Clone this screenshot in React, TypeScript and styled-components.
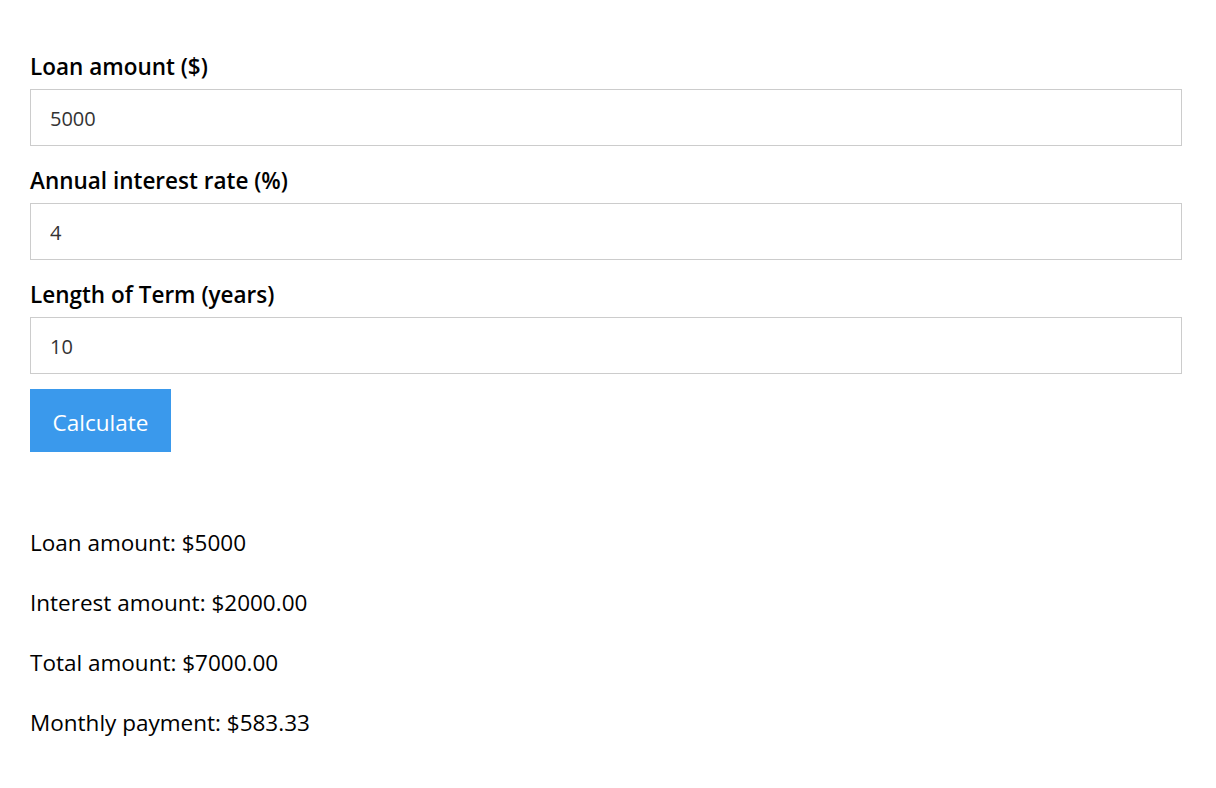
import React, { useState } from "react";
import styled, { createGlobalStyle } from "styled-components";

const GlobalStyle = createGlobalStyle`
  html, body {
    margin: 0;
    padding: 0;
    background: #ffffff;
  }
  body {
    font-family: "Open Sans", "Noto Sans", sans-serif;
    color: #000000;
  }
`;

const Page = styled.div`
  padding: 47px 34px 30px 30px;
`;

const Form = styled.form`
  display: flex;
  flex-direction: column;
  gap: 15px;
`;

const Field = styled.div`
  display: flex;
  flex-direction: column;
  padding-top: 5px;
  gap: 7px;
`;

const Label = styled.label`
  font-size: 22.5px;
  font-weight: 600;
  line-height: 30px;
`;

const Input = styled.input`
  box-sizing: border-box;
  width: 100%;
  height: 57px;
  padding: 2px 19px 0;
  border: 1px solid #cccccc;
  border-radius: 0;
  font-family: inherit;
  font-size: 20px;
  color: #333333;
  outline: none;
`;

const Button = styled.button`
  align-self: flex-start;
  width: 141px;
  height: 63px;
  padding: 3px 0 0;
  border: none;
  border-radius: 0;
  background: #3a99ec;
  color: #ffffff;
  font-family: inherit;
  font-size: 22.5px;
  cursor: pointer;
`;

const Results = styled.div`
  margin-top: 76px;
  display: flex;
  flex-direction: column;
  gap: 30px;
`;

const Line = styled.p`
  margin: 0;
  font-size: 22.5px;
  line-height: 30px;
`;

export default function App() {
  const [amount, setAmount] = useState("5000");
  const [rate, setRate] = useState("4");
  const [years, setYears] = useState("10");
  const [result, setResult] = useState({ amount: "5000", interest: 2000, total: 7000, monthly: 583.33 });

  const calculate = (e: React.FormEvent) => {
    e.preventDefault();
    const a = parseFloat(amount) || 0;
    const r = parseFloat(rate) || 0;
    const y = parseFloat(years) || 0;
    const interest = (a * r * y) / 100;
    const total = a + interest;
    setResult({ amount, interest, total, monthly: y ? total / (y * 12) : 0 });
  };

  return (
    <>
      <GlobalStyle />
      <Page>
        <Form onSubmit={calculate}>
          <Field>
            <Label htmlFor="amount">Loan amount ($)</Label>
            <Input id="amount" value={amount} onChange={(e) => setAmount(e.target.value)} />
          </Field>
          <Field>
            <Label htmlFor="rate">Annual interest rate (%)</Label>
            <Input id="rate" value={rate} onChange={(e) => setRate(e.target.value)} />
          </Field>
          <Field>
            <Label htmlFor="years">Length of Term (years)</Label>
            <Input id="years" value={years} onChange={(e) => setYears(e.target.value)} />
          </Field>
          <Button type="submit">Calculate</Button>
        </Form>
        <Results>
          <Line>Loan amount: ${result.amount}</Line>
          <Line>Interest amount: ${result.interest.toFixed(2)}</Line>
          <Line>Total amount: ${result.total.toFixed(2)}</Line>
          <Line>Monthly payment: ${result.monthly.toFixed(2)}</Line>
        </Results>
      </Page>
    </>
  );
}
